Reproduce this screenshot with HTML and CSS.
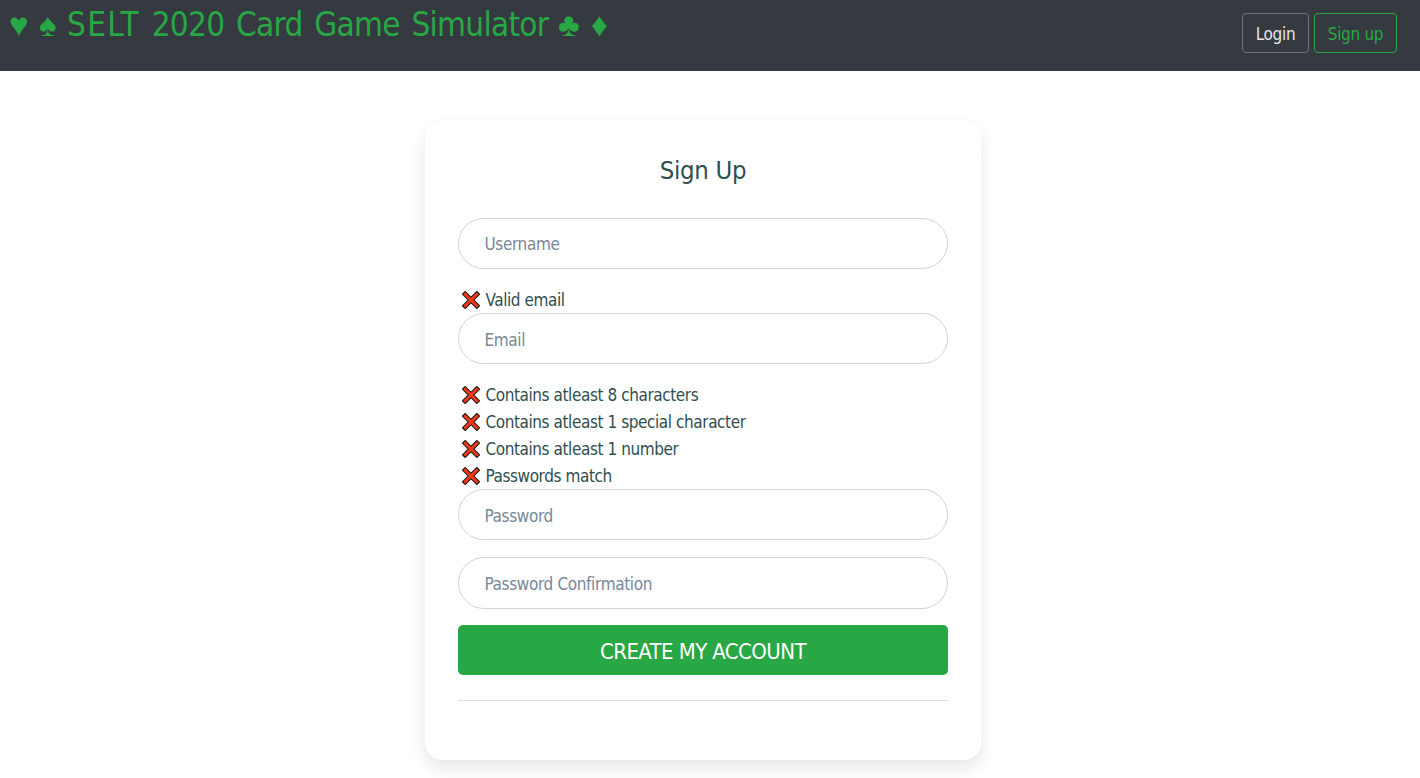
FILE: index.html
```html
<!DOCTYPE html>
<html lang="en">
<head>
<meta charset="utf-8">
<title>SELT 2020 Card Game Simulator</title>
<link rel="stylesheet" href="styles.css">
</head>
<body>
<svg class="defs" aria-hidden="true"><symbol id="cross" viewBox="0 0 18 18"><path class="cross-edge" d="M3.2 3.2 14.8 14.8M14.8 3.2 3.2 14.8"/><path class="cross-fill" d="M3.2 3.2 14.8 14.8M14.8 3.2 3.2 14.8"/></symbol></svg>
<header class="navbar">
  <h1 class="brand"><span class="suit heart">♥</span> <span class="suit spade">♠</span> <span class="name"><span class="caps">SELT</span> 2020 Card Game Simulator</span> <span class="suit club">♣</span> <span class="suit">♦</span></h1>
  <nav class="actions"><a class="btn login">Login</a><a class="btn signup">Sign up</a></nav>
</header>
<main class="card">
  <h2 class="title">Sign Up</h2>
  <form class="form">
    <input class="field" type="text" placeholder="Username">
    <ul class="checks">
      <li class="check"><svg class="cross"><use href="#cross"/></svg><span>Valid email</span></li>
    </ul>
    <input class="field low" type="text" placeholder="Email">
    <ul class="checks">
      <li class="check"><svg class="cross"><use href="#cross"/></svg><span>Contains atleast 8 characters</span></li>
      <li class="check"><svg class="cross"><use href="#cross"/></svg><span>Contains atleast 1 special character</span></li>
      <li class="check"><svg class="cross"><use href="#cross"/></svg><span>Contains atleast 1 number</span></li>
      <li class="check"><svg class="cross"><use href="#cross"/></svg><span>Passwords match</span></li>
    </ul>
    <input class="field low" type="password" placeholder="Password">
    <input class="field confirm" type="password" placeholder="Password Confirmation">
    <button class="submit" type="button">CREATE MY ACCOUNT</button>
  </form>
  <hr class="rule">
</main>
</body>
</html>
```
FILE: styles.css
```css
* { box-sizing: border-box; }
body {
  margin: 0;
  height: 778px;
  overflow: hidden;
  background: #fff;
  color: #2f4f4f;
  font-family: Tahoma, "DejaVu Sans Condensed", "DejaVu Sans", sans-serif;
  font-stretch: condensed;
  font-size: 17px;
}
.defs { position: absolute; width: 0; height: 0; }
.navbar {
  display: flex;
  justify-content: space-between;
  align-items: flex-start;
  height: 71px;
  padding: 0 23px 0 9px;
  background: #343a40;
}
.brand {
  display: flex;
  align-items: baseline;
  margin: 4px 0 0;
  color: #28a745;
  font-size: 33px;
  font-weight: 400;
  line-height: 41px;
  white-space: nowrap;
}
.name {
  width: 491px;
  letter-spacing: -0.72px;
  word-spacing: 3px;
}
.caps { letter-spacing: 1.3px; }
.suit { width: 29px; font-family: "Liberation Sans", sans-serif; }
.heart { width: 30px; }
.spade { width: 28px; }
.club { width: 33px; }
.actions { display: flex; gap: 5px; padding-top: 13px; }
.btn {
  height: 40px;
  border: 1px solid #6c757d;
  border-radius: 4px;
  text-align: center;
  line-height: 41px;
  letter-spacing: -0.3px;
}
.login { width: 67px; color: #e3e6e8; }
.signup { width: 83px; border-color: #28a745; color: #28a745; }
.card {
  width: 556px;
  height: 639px;
  margin: 50px 0 0 425px;
  padding: 33px 33px;
  border-radius: 17px;
  background: #fff;
  box-shadow: 0 8px 17px rgba(0, 0, 0, 0.1);
}
.title {
  margin: 0 0 31px;
  font-size: 25.5px;
  font-weight: 400;
  line-height: 33px;
  letter-spacing: -0.3px;
  text-align: center;
}
.form { display: flex; flex-direction: column; }
.field {
  width: 100%;
  height: 51px;
  margin: 0;
  padding: 1px 25px 0 25.5px;
  border: 1px solid #ced4da;
  border-radius: 26px;
  background: #fff;
  font: inherit;
  letter-spacing: -0.36px;
}
.field::placeholder { color: #778899; opacity: 1; }
.low { padding-top: 3px; }
.confirm { height: 52px; margin-top: 17px; }
.checks { margin: 17px 0 0; padding: 0; list-style: none; }
.check {
  display: flex;
  align-items: center;
  gap: 5.5px;
  height: 27px;
  padding-left: 4px;
  letter-spacing: -0.42px;
}
.cross { width: 18px; height: 18px; }
.cross-edge { fill: none; stroke: #1b1b1b; stroke-width: 5; stroke-linecap: square; }
.cross-fill { fill: none; stroke: #f03a17; stroke-width: 2.9; stroke-linecap: square; }
.submit {
  height: 50px;
  margin-top: 16px;
  padding: 2px 0 0;
  border: 0;
  border-radius: 5px;
  background: #28a745;
  color: #fff;
  font: inherit;
  font-size: 22px;
  letter-spacing: -0.6px;
}
.rule { margin: 25px 0 0; border: 0; border-top: 1px solid #e1e1e1; }
```
